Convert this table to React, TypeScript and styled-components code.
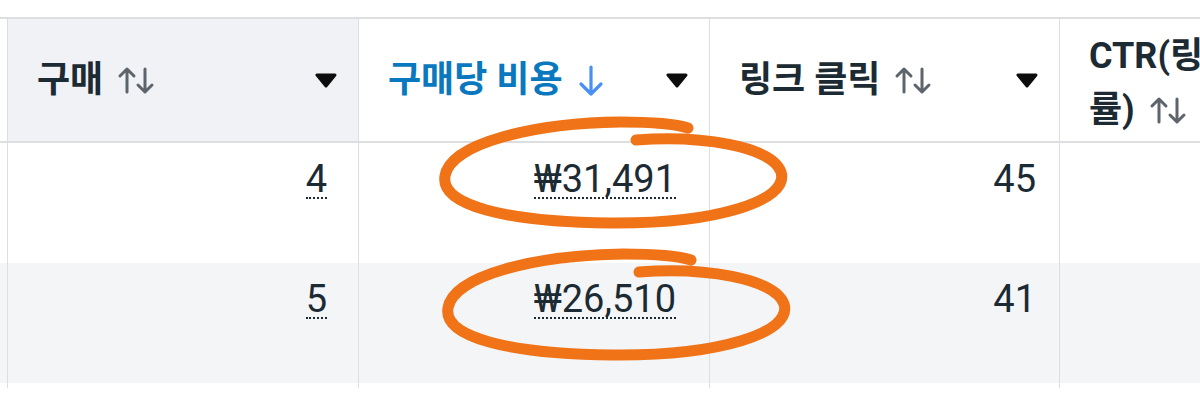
import styled, { createGlobalStyle } from "styled-components";

const GlobalStyle = createGlobalStyle`
  body {
    margin: 0;
    background: #ffffff;
    font-family: Roboto, "Noto Sans CJK KR", sans-serif;
    color: #1c2b33;
  }
`;

const Page = styled.div`
  position: relative;
  width: 1200px;
  height: 400px;
  overflow: hidden;
  padding-top: 17px;
  box-sizing: border-box;
`;

const Table = styled.div`
  height: 371px;
  overflow: hidden;
`;

const Row = styled.div<{ $head?: boolean; $striped?: boolean }>`
  display: grid;
  grid-template-columns: 7px 351px 351px 350px 350px;
  width: 1409px;
  height: ${(p) => (p.$head ? "126px" : "120px")};
  box-sizing: border-box;
  background: ${(p) => (p.$striped ? "#f4f5f7" : "#ffffff")};
  border-top: ${(p) => (p.$head ? "2px solid #dcdee1" : "none")};
  border-bottom: ${(p) => (p.$head ? "2px solid #dcdee1" : "none")};
`;

const Edge = styled.div``;

const HeadCell = styled.div<{ $hover?: boolean }>`
  display: flex;
  align-items: center;
  justify-content: space-between;
  padding: 0 20px 0 29px;
  border-left: 1px solid #dcdee1;
  background: ${(p) => (p.$hover ? "#f0f2f5" : "#ffffff")};
`;

const Label = styled.div<{ $active?: boolean }>`
  display: flex;
  align-items: center;
  gap: 14px;
  font-size: 36px;
  font-weight: 700;
  line-height: 54px;
  color: ${(p) => (p.$active ? "#0a78be" : "#1c2b33")};
  white-space: nowrap;
`;

const Wrap = styled.div`
  font-size: 36px;
  font-weight: 700;
  line-height: 54px;
  color: #1c2b33;
  margin-top: 6px;
  white-space: nowrap;
`;

const Cell = styled.div<{ $pad: number }>`
  display: flex;
  justify-content: flex-end;
  align-items: flex-start;
  padding: 18px ${(p) => p.$pad}px 0 0;
  border-left: 1px solid #dcdee1;
`;

const Value = styled.span<{ $dotted?: boolean }>`
  display: inline-block;
  font-size: 38px;
  line-height: 36px;
  color: #1c2b33;
  border-bottom: 2px ${(p) => (p.$dotted ? "dotted #1c2b33" : "solid transparent")};
`;

const Marks = styled.svg`
  position: absolute;
  left: 0;
  top: 0;
  pointer-events: none;
`;

const SortIcon = () => (
  <svg width="38" height="30" viewBox="0 0 38 30" fill="none" stroke="#5d646b" strokeWidth="3" strokeLinecap="round" strokeLinejoin="round">
    <path d="M10 27V4M3 11l7-7 7 7" />
    <path d="M28 4v23M21 20l7 7 7-7" />
  </svg>
);

const DownIcon = () => (
  <svg width="28" height="33" viewBox="0 0 28 33" fill="none" stroke="#4a8ff5" strokeWidth="3.2" strokeLinecap="round" strokeLinejoin="round">
    <path d="M14 3v27M4 20l10 10 10-10" />
  </svg>
);

const Caret = () => (
  <svg width="24" height="15" viewBox="0 0 24 15">
    <path d="M3 2h18L12 13z" fill="#0d0d0d" stroke="#0d0d0d" strokeWidth="3" strokeLinejoin="round" />
  </svg>
);

const rows = [
  { buy: "4", cost: "₩31,491", clicks: "45" },
  { buy: "5", cost: "₩26,510", clicks: "41" },
];

// hand-drawn loop around a value, shifted per row
const circle = (dx: number, dy: number) =>
  `M${636 + dx} ${140 + dy} C${700 + dx} ${135 + dy}, ${772 + dx} ${146 + dy}, ${781 + dx} ${172 + dy}
   C${790 + dx} ${201 + dy}, ${715 + dx} ${224 + dy}, ${610 + dx} ${223 + dy}
   C${505 + dx} ${222 + dy}, ${440 + dx} ${205 + dy}, ${445 + dx} ${176 + dy}
   C${450 + dx} ${143 + dy}, ${535 + dx} ${123 + dy}, ${620 + dx} ${122 + dy}
   C${650 + dx} ${122 + dy}, ${676 + dx} ${124 + dy}, ${688 + dx} ${128 + dy}`;

export default function App() {
  return (
    <>
      <GlobalStyle />
      <Page>
        <Table>
          <Row $head>
            <Edge />
            <HeadCell $hover>
              <Label>
                구매 <SortIcon />
              </Label>
              <Caret />
            </HeadCell>
            <HeadCell>
              <Label $active>
                구매당 비용 <DownIcon />
              </Label>
              <Caret />
            </HeadCell>
            <HeadCell>
              <Label>
                링크 클릭 <SortIcon />
              </Label>
              <Caret />
            </HeadCell>
            <HeadCell>
              <Wrap>
                CTR(링크 클릭
                <br />
                <Label as="span">
                  률) <SortIcon />
                </Label>
              </Wrap>
              <Caret />
            </HeadCell>
          </Row>
          {rows.map((r, i) => (
            <Row key={i} $striped={i % 2 === 1}>
              <Edge />
              <Cell $pad={31}>
                <Value $dotted>{r.buy}</Value>
              </Cell>
              <Cell $pad={33}>
                <Value $dotted>{r.cost}</Value>
              </Cell>
              <Cell $pad={23}>
                <Value>{r.clicks}</Value>
              </Cell>
              <Cell $pad={23} />
            </Row>
          ))}
          <Row>
            <Edge />
            <Cell $pad={31} />
            <Cell $pad={33} />
            <Cell $pad={23} />
            <Cell $pad={23} />
          </Row>
        </Table>
        <Marks width="1200" height="400" viewBox="0 0 1200 400" fill="none" stroke="#f07318" strokeWidth="11" strokeLinecap="round" strokeLinejoin="round">
          <path d={circle(0, 0)} />
          <path d={circle(3, 132)} />
        </Marks>
      </Page>
    </>
  );
}
